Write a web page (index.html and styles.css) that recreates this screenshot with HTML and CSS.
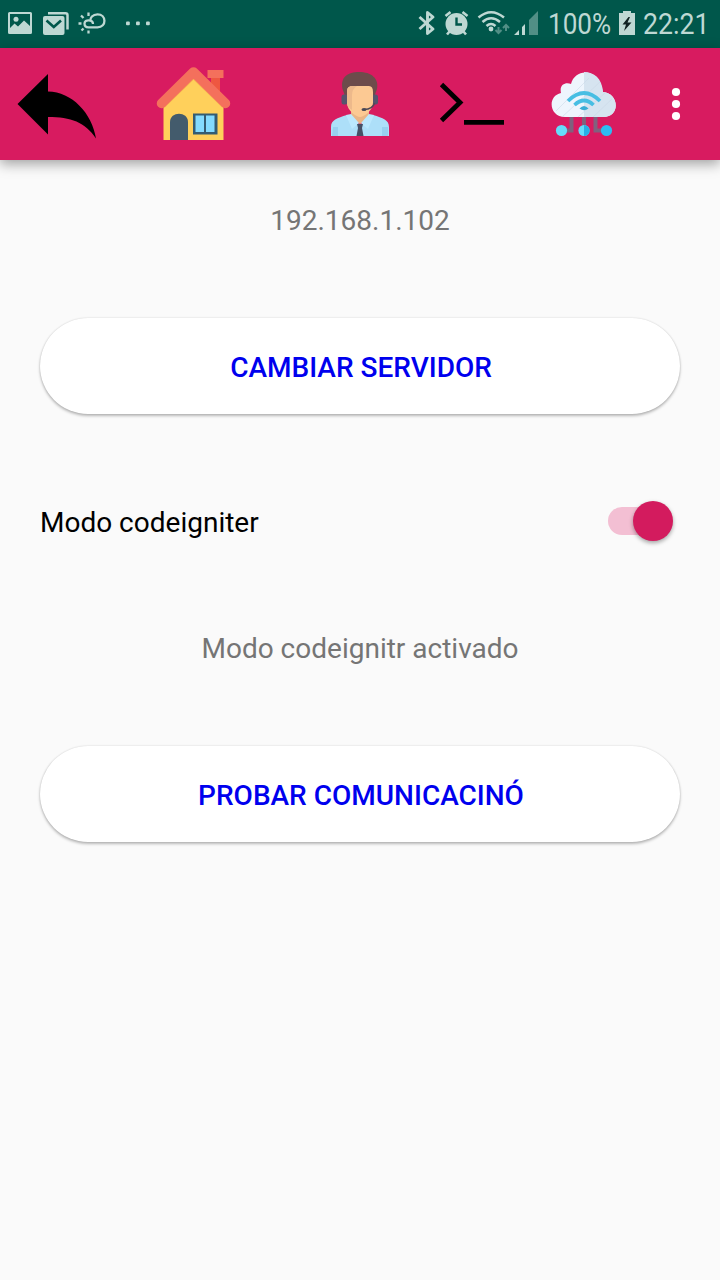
FILE: index.html
```html
<!DOCTYPE html>
<html lang="es">
<head>
<meta charset="utf-8">
<title>Servidor</title>
<link rel="stylesheet" href="styles.css">
</head>
<body>
<div class="screen">
  <div class="status">
    <svg width="160" height="48" viewBox="0 0 160 48">
      <g fill="#bed8d3">
        <path fill-rule="evenodd" d="M9.500 12H30.500Q32 12 32 13.500V32.500Q32 34 30.500 34H9.500Q8 34 8 32.500V13.500Q8 12 9.500 12ZM10 14V28L14.500 23.500L18 26.500L24 20.500L30 26V14Z"/>
        <circle cx="16" cy="19.300" r="2.500"/>
        <path d="M48 13.300H65.500Q67.500 13.300 67.500 15.300V29.500" fill="none" stroke="#bed8d3" stroke-width="2.500"/>
        <rect x="43" y="16" width="21.500" height="19" rx="2"/>
        <path d="M46.500 20.500L53.800 27L61 20.500" fill="none" stroke="#00574b" stroke-width="2.600"/>
        <g fill="none" stroke="#bed8d3" stroke-width="2.300">
          <path d="M93 24C93 19.500 84.500 19 84.500 23.500Q84.500 27.300 88.500 27.300H97.500C107 27.300 106.500 14.300 97.500 14.300C92.500 14.300 90 18 90.500 20.500"/>
          <path d="M88.500 12.500V16M81 15.500L83.500 18M78.500 23.500H81.500M81.500 30.500L83.500 28.500M88.500 30.500V33.500"/>
        </g>
        <rect x="126" y="21.500" width="3.800" height="3.800" rx="1"/><rect x="136" y="21.500" width="3.800" height="3.800" rx="1"/><rect x="146" y="21.500" width="3.800" height="3.800" rx="1"/>
      </g>
    </svg>
    <div class="status-right">
      <svg width="133" height="48" viewBox="415 0 133 48">
        <path d="M419.500 17L433 29L427.500 33.500V12.500L433 17L419.500 29" fill="none" stroke="#bed8d3" stroke-width="2.900" stroke-linejoin="round"/>
        <g fill="#bed8d3"><circle cx="456.500" cy="24" r="11"/>
          <path d="M445.500 16L450.500 12M462.500 12L467.500 16M450 31L447 34.500M463 31L466 34.500" stroke="#bed8d3" stroke-width="2.600"/>
          <path d="M456.500 17.500V24.500H462" fill="none" stroke="#00574b" stroke-width="2.400"/>
          <circle cx="491" cy="29" r="2.400"/>
        </g>
        <g fill="none" stroke="#bed8d3" stroke-width="2.500"><path d="M478.500 17.500Q491 7 504 17.500M482.500 22Q491 14.500 500 22M486.500 26Q491 22 495.500 26"/></g>
        <path d="M498.500 27V33M495.500 30L498.500 33L501.500 30M506 31V25M503 28L506 25L509 28" fill="none" stroke="#528f86" stroke-width="2"/>
        <path d="M514 35L519 30V35ZM522 35V27L525 24V35Z" fill="#bed8d3"/>
        <path d="M529 35V20L538 11V35Z" fill="#528f86"/>
      </svg>
      <span class="cond percent">100%</span>
      <svg class="battery" width="16" height="48" viewBox="619 0 16 48">
        <path d="M623 11H631V13H635V35H619V13H623Z" fill="#bed8d3"/>
        <path d="M628.500 17L622.500 24.500H626L624 31L631.500 22.500H627.500L630 17Z" fill="#122"/>
      </svg>
      <span class="cond clock">22:21</span>
    </div>
  </div>

  <div class="toolbar">
    <svg width="82" height="112" viewBox="16 48 82 112"><path d="M17.500 104L48 74V91.500C72 92 92 113 96 138.500C85 122 71 117 48 117V134.500Z"/></svg>
    <svg class="home" width="76" height="112" viewBox="156 48 76 112">
      <path d="M211 76H220V98H211Z" fill="#ee5741"/>
      <path d="M207.500 70H223.500V78H207.500Z" fill="#f4705c"/>
      <path d="M193.500 76L223.500 105V140H163.500V105Z" fill="#ffd05b"/>
      <path d="M163.500 106L193.500 77L223.500 106" fill="none" stroke="#f6b74f" stroke-width="4"/>
      <path d="M161.500 103.500L193.500 72L225.500 103.500" fill="none" stroke="#f4705c" stroke-width="9.500" stroke-linecap="round" stroke-linejoin="round"/>
      <path d="M170 140V122C170 111 188 111 188 122V140Z" fill="#435b6c"/>
      <path d="M193 113.500H217.500V134.500H193Z" fill="#345c73"/>
      <path d="M195.500 115.500H204V132H195.500ZM206 115.500H214.500V132H206Z" fill="#84dbff"/>
    </svg>
    <svg class="agent" width="60" height="112" viewBox="330 48 60 112">
      <path d="M345 96L342.500 89C340 77 348 72 359 72C371 72 379 78 377 89L374.500 96Z" fill="#6d4c4b"/>
      <rect x="341.500" y="94.500" width="6" height="10" rx="2.500" fill="#56546d"/>
      <rect x="372" y="94.500" width="6" height="10" rx="2.500" fill="#56546d"/>
      <path d="M331 136V127C331 120 337 118 347 115L360 125L373 115C383 118 389 120 389 127V136Z" fill="#addff9"/>
      <path d="M351 108H369V117L360 124L351 117Z" fill="#e9b586"/>
      <path d="M347 91Q347 86 353 86L369 86Q373 86 373 92V103C373 110 364 117 360 117S347 110 347 103Z" fill="#fcc993"/>
      <path d="M347 91Q347 86 353 86H357Q352 89 352 95V110Q347 107 347 103Z" fill="#edb98b"/>
      <path d="M346 115L351 114L359 123L352 129ZM374 115L369 114L361 123L368 129Z" fill="#bbe8fe"/>
      <path d="M333 127H338V136H332ZM382 127H388V136H382Z" fill="#98d0f0"/>
      <path d="M357 124H363L362 128L363.500 136H356.500L358 128Z" fill="#475066"/>
      <path d="M374.500 103Q373 109 364 109.500" fill="none" stroke="#514957" stroke-width="1.500"/><ellipse cx="364" cy="109.500" rx="2.500" ry="1.500" fill="#484856"/>
    </svg>
    <svg class="terminal" width="66" height="112" viewBox="439 48 66 112"><path d="M441.500 84.500L460 102.500L441.500 120.500M464 122.300H504" fill="none" stroke="#000" stroke-width="4.800"/></svg>
    <svg class="cloud" width="66" height="112" viewBox="551 48 66 112">
      <path d="M571.500 116V130.500H562M595.500 116V130.500H606M584 116V130" fill="none" stroke="#80617e" stroke-width="4"/>
      <path d="M565 117C549 117 547 96 561 93C559 84 566 82 571 84C575 68 599 67 603 92C619 93 621 117 603 117Z" fill="#eef5fd"/>
      <path d="M584 72C594 72 602 78 603 92C619 93 621 117 603 117H584Z" fill="#d6e4f0"/>
      <path d="M556 111L589 78M562 117L600 82M578 117L605 93M593 117L612 99" stroke="#cbd9e8" stroke-width="1" opacity=".55"/>
      <g fill="none" stroke="#47bee3" stroke-width="3.700"><path d="M568 101Q584 85 600 101M574.500 105Q584 96 593.500 105"/></g>
      <path d="M579.500 108.500Q584 103.500 588.500 108.500Q584 112 579.500 108.500Z" fill="#39add6"/>
      <circle cx="561.500" cy="130.500" r="5.600" fill="#66dcfa"/><circle cx="584" cy="130.500" r="5.600" fill="#66dcfa"/><path d="M584 124.900A5.600 5.600 0 0 1 584 136.100Z" fill="#28afe6"/><circle cx="606.500" cy="130.500" r="5.600" fill="#2cbcf2"/>
    </svg>
    <svg class="more" width="10" height="112" viewBox="671 48 10 112"><g fill="#fff"><circle cx="676" cy="92" r="4.100"/><circle cx="676" cy="104" r="4.100"/><circle cx="676" cy="116" r="4.100"/></g></svg>
  </div>

  <main class="content">
    <div class="label address">192.168.1.102</div>
    <button class="pill">CAMBIAR SERVIDOR</button>
    <div class="mode"><span>Modo codeigniter</span><div class="switch"><div class="thumb"></div></div></div>
    <div class="label">Modo codeignitr activado</div>
    <button class="pill probe">PROBAR COMUNICACINÓ</button>
  </main>
</div>
</body>
</html>
```
FILE: styles.css
```css
body { margin: 0; font-family: Roboto, sans-serif; }
svg { display: block; flex: none; }
.screen { width: 720px; height: 1280px; display: flex; flex-direction: column; background: #fafafa; overflow: hidden; }
.status { height: 48px; flex: none; display: flex; justify-content: space-between; background: #00574b; color: #bed8d3; }
.status-right { display: flex; width: 305px; }
.cond { font-size: 30px; line-height: 48px; transform: scaleX(.87); transform-origin: left; white-space: nowrap; }
.percent { width: 71px; }
.battery { margin-right: 8px; }
.clock { width: 70px; transform: scaleX(.89); }
.toolbar { height: 112px; flex: none; display: flex; padding-left: 16px; background: #d81b60; box-shadow: 0 4px 12px rgba(0, 0, 0, .36); }
.home { margin-left: 58px; }
.agent { margin-left: 98px; }
.terminal { margin-left: 49px; }
.cloud { margin-left: 46px; }
.more { margin-left: 54px; }
.content { display: flex; flex-direction: column; padding: 42px 40px 0; font-size: 28px; }
.label { height: 38px; line-height: 38px; text-align: center; color: #757575; }
.address { margin-bottom: 78px; }
.pill { height: 96px; flex: none; border: 0; padding: 2px 0 0 2px; border-radius: 48px; background: #fff; color: #00e; font: 500 28px Roboto, sans-serif; box-shadow: 0 2px 3px rgba(0, 0, 0, .26), 0 0 2px rgba(0, 0, 0, .15); }
.mode { height: 40px; margin: 87px 7px 89px 0; display: flex; justify-content: space-between; align-items: center; color: #000; }
.mode span { line-height: 40px; padding-top: 3px; }
.switch { width: 65px; height: 28px; display: flex; justify-content: flex-end; align-items: center; border-radius: 14px; background: linear-gradient(90deg, #f3bfd3 50px, transparent 50px); }
.thumb { width: 40px; height: 40px; flex: none; border-radius: 50%; background: #d31b5e; box-shadow: 0 2px 4px rgba(0, 0, 0, .35); }
.probe { margin-top: 78px; }
```
